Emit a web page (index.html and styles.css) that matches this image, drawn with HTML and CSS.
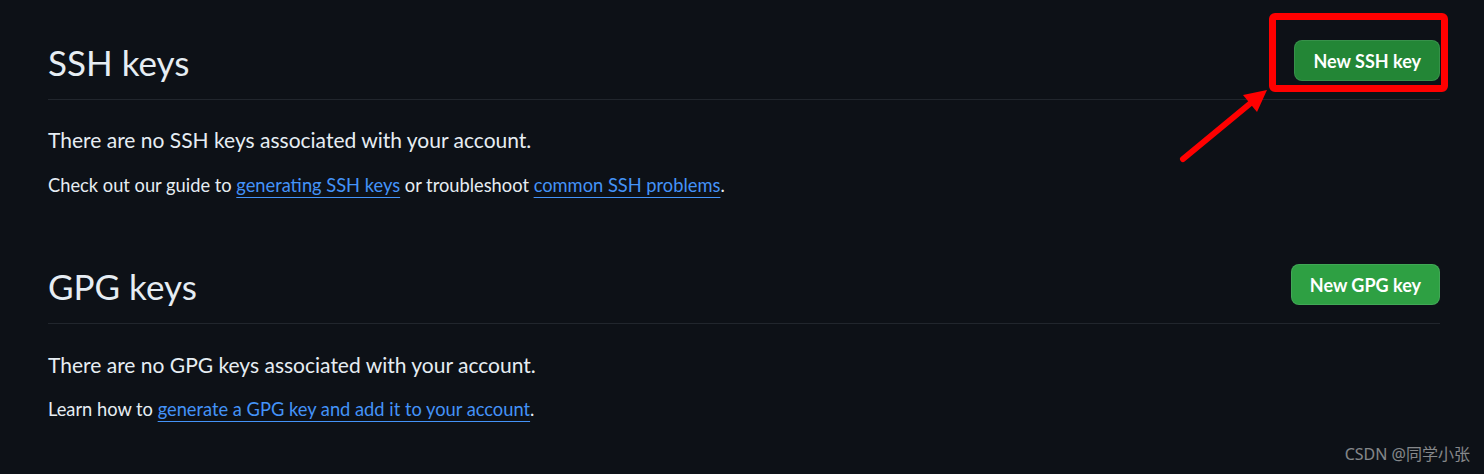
FILE: index.html
```html
<!DOCTYPE html>
<html lang="en">
<head>
<meta charset="utf-8">
<title>SSH and GPG keys</title>
<link rel="stylesheet" href="styles.css">
</head>
<body>
<main class="page">
  <section class="keys">
    <div class="keys-head">
      <h2 class="keys-title">SSH keys</h2>
      <button class="btn btn-primary">New SSH key</button>
    </div>
    <p class="lead">There are no SSH keys associated with your account.</p>
    <p class="note">Check out our guide to <a href="#">generating SSH keys</a> or troubleshoot <a href="#">common SSH problems</a>.</p>
  </section>
  <section class="keys keys-gpg">
    <div class="keys-head">
      <h2 class="keys-title">GPG keys</h2>
      <button class="btn btn-hover">New GPG key</button>
    </div>
    <p class="lead">There are no GPG keys associated with your account.</p>
    <p class="note">Learn how to <a href="#">generate a GPG key and add it to your account</a>.</p>
  </section>
</main>
<div class="highlight-box"></div>
<svg class="arrow" width="1484" height="474" viewBox="0 0 1484 474" aria-hidden="true">
  <line x1="1183" y1="159" x2="1252" y2="102" stroke="#ff0000" stroke-width="6" stroke-linecap="round"/>
  <polygon points="1267,90 1257,112 1243,95" fill="#ff0000"/>
</svg>
<div class="watermark">CSDN @同学小张</div>
</body>
</html>
```
FILE: styles.css
```css
html, body {
  margin: 0;
  padding: 0;
  background: #0d1117;
  width: 1484px;
  height: 474px;
  overflow: hidden;
}
body {
  position: relative;
  font-family: "Lato", "Noto Sans", "Noto Sans CJK SC", sans-serif;
  color: #e6edf3;
}
.page {
  padding: 40px 44px 0 48px;
}
.keys-gpg {
  margin-top: 66px;
}
.keys-head {
  display: flex;
  justify-content: space-between;
  align-items: center;
  padding-bottom: 18px;
  border-bottom: 1px solid #21262d;
}
.keys-title {
  margin: 0;
  font-size: 35px;
  font-weight: 400;
  line-height: 41px;
  position: relative;
  top: 2px;
}
.btn {
  height: 41px;
  padding: 0 18px;
  border: 1px solid rgba(240, 246, 252, 0.1);
  border-radius: 8px;
  color: #ffffff;
  font-family: inherit;
  font-size: 18px;
  font-weight: 700;
  cursor: pointer;
}
.btn-primary {
  background: #238636;
}
.btn-hover {
  background: #2ea043;
}
.lead {
  margin: 25px 0 0;
  font-size: 21px;
  line-height: 30px;
}
.keys-gpg .lead {
  margin-top: 26px;
}
.note {
  margin: 17px 0 0;
  font-size: 18.3px;
  line-height: 26px;
}
.keys-gpg .note {
  margin-top: 16px;
}
.note a {
  color: #4493f8;
  text-decoration: underline;
  text-underline-offset: 5px;
  text-decoration-thickness: 1px;
}
.highlight-box {
  position: absolute;
  left: 1269px;
  top: 13px;
  width: 165px;
  height: 65px;
  border: 7px solid #ff0000;
  border-radius: 6px;
}
.arrow {
  position: absolute;
  left: 0;
  top: 0;
}
.watermark {
  position: absolute;
  right: 14px;
  top: 444px;
  font-size: 16px;
  line-height: 20px;
  white-space: nowrap;
  font-family: "Noto Sans", "Noto Sans CJK SC", sans-serif;
  color: rgba(255, 255, 255, 0.5);
}
```
